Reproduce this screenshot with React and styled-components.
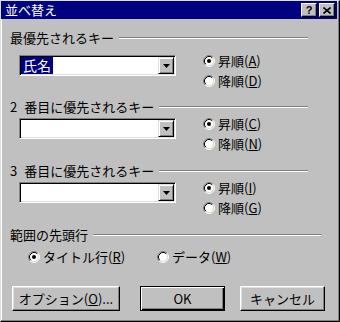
import React from 'react';
import styled, { createGlobalStyle } from 'styled-components';

const GlobalStyle = createGlobalStyle`
  html, body {
    margin: 0;
    padding: 0;
    background: #c0c0c0;
  }

  body {
    font-family: "Noto Sans CJK JP", "Noto Sans", sans-serif;
    font-size: 13px;
    color: #000;
  }
`;

const Window = styled.div`
  box-sizing: border-box;
  width: 340px;
  height: 322px;
  display: flex;
  flex-direction: column;
  padding: 0 2px 2px 0;
  background: #c0c0c0;
  border-style: solid;
  border-width: 1px;
  border-color: #dfdfdf #000 #000 #dfdfdf;
  box-shadow: inset -1px -1px #808080, inset 1px 1px #fff;
`;

const TitleBar = styled.div`
  display: flex;
  align-items: center;
  height: 18px;
  padding: 0 2px 0 4px;
  background: #000080;
  color: #fff;
`;

const Title = styled.div`
  margin-right: auto;
  line-height: 14px;
`;

const CaptionButton = styled.div`
  box-sizing: border-box;
  width: 16px;
  height: 14px;
  margin-left: ${(p) => p.$gap || 0}px;
  display: flex;
  align-items: center;
  justify-content: center;
  background: #c0c0c0;
  color: #000;
  border-style: solid;
  border-width: 1px;
  border-color: #fff #000 #000 #fff;
  box-shadow: inset -1px -1px #808080;
  font-family: "Liberation Sans", sans-serif;
  font-weight: bold;
  font-size: 11px;
  line-height: 11px;
`;

const Body = styled.div`
  display: flex;
  flex-direction: column;
  padding: 12px 0 0 9px;
`;

const Section = styled.div`
  display: flex;
  flex-direction: column;
  margin-top: ${(p) => p.$mt || 0}px;
`;

const Header = styled.div`
  display: flex;
  align-items: center;
  width: ${(p) => p.$width}px;
  height: 14px;
  line-height: 14px;
`;

const Legend = styled.div`
  white-space: nowrap;
  word-spacing: 4px;
`;

const Rule = styled.div`
  flex: 1;
  height: 0;
  margin-left: 5px;
  border-top: 1px solid #808080;
  border-bottom: 1px solid #fff;
`;

const KeyRow = styled.div`
  display: flex;
  align-items: flex-start;
  margin-top: ${(p) => p.$mt || 0}px;
  padding-left: 9px;
`;

const Combo = styled.div`
  box-sizing: border-box;
  width: 157px;
  height: 21px;
  margin-top: 4px;
  padding: 1px;
  display: flex;
  background: #fff;
  border-style: solid;
  border-width: 1px;
  border-color: #808080 #fff #fff #808080;
  box-shadow: inset 1px 1px #000, inset -1px -1px #dfdfdf;
`;

const ComboValue = styled.div`
  flex: 1;
  display: flex;
  align-items: center;
`;

const Selected = styled.span`
  height: 17px;
  padding: 0 2px;
  background: #000080;
  color: #fff;
  font-size: 14px;
  line-height: 17px;
`;

const DropButton = styled.div`
  box-sizing: border-box;
  width: 16px;
  display: flex;
  align-items: center;
  justify-content: center;
  background: #c0c0c0;
  border-style: solid;
  border-width: 1px;
  border-color: #dfdfdf #000 #000 #dfdfdf;
  box-shadow: inset 1px 1px #fff, inset -1px -1px #808080;
`;

const RadioCol = styled.div`
  display: flex;
  flex-direction: column;
  margin-left: 27px;
`;

const RadioItem = styled.label`
  display: flex;
  align-items: center;
  gap: 3px;
  height: 20px;
  width: ${(p) => (p.$width ? `${p.$width}px` : 'auto')};
  line-height: 14px;
  white-space: nowrap;
`;

const OptionRow = styled.div`
  display: flex;
  margin-top: 5px;
  padding-left: 18px;
`;

const ButtonRow = styled.div`
  display: flex;
  margin-top: 19px;
  padding-left: 2px;
`;

const Button = styled.div`
  box-sizing: border-box;
  width: ${(p) => p.$width}px;
  height: 25px;
  margin-left: ${(p) => p.$gap || 0}px;
  display: flex;
  align-items: center;
  justify-content: center;
  background: #c0c0c0;
  border-style: solid;
  border-width: 1px;
  border-color: ${(p) => (p.$default ? '#000' : '#fff #000 #000 #fff')};
  box-shadow: ${(p) => (p.$default
    ? 'inset 1px 1px #fff, inset -1px -1px #000, inset -2px -2px #808080'
    : 'inset -1px -1px #808080, inset 1px 1px #dfdfdf')};
  line-height: 14px;
  white-space: nowrap;
`;

const Radio = ({ checked }) => (
  <svg width="12" height="12" viewBox="0 0 12 12">
    <circle cx="6" cy="6" r="4.5" fill="#fff" />
    <path d="M2.11 9.89 A5.5 5.5 0 0 1 9.89 2.11" fill="none" stroke="#808080" />
    <path d="M9.89 2.11 A5.5 5.5 0 0 1 2.11 9.89" fill="none" stroke="#fff" />
    <path d="M2.82 9.18 A4.5 4.5 0 0 1 9.18 2.82" fill="none" stroke="#000" />
    <path d="M9.18 2.82 A4.5 4.5 0 0 1 2.82 9.18" fill="none" stroke="#dfdfdf" />
    {checked && <circle cx="6" cy="6" r="2" fill="#000" />}
  </svg>
);

const Option = ({ checked, label, keyChar, width }) => (
  <RadioItem $width={width}>
    <Radio checked={checked} />
    <span>
      {label}(<u>{keyChar}</u>)
    </span>
  </RadioItem>
);

const SortKey = ({ title, mt, rowMt, value, asc, desc }) => (
  <Section $mt={mt}>
    <Header $width={298}>
      <Legend>{title}</Legend>
      <Rule />
    </Header>
    <KeyRow $mt={rowMt}>
      <Combo>
        <ComboValue>{value && <Selected>{value}</Selected>}</ComboValue>
        <DropButton>
          <svg width="7" height="4" viewBox="0 0 7 4">
            <path d="M0 0h7L3.5 4z" fill="#000" />
          </svg>
        </DropButton>
      </Combo>
      <RadioCol>
        <Option checked label="昇順" keyChar={asc} />
        <Option label="降順" keyChar={desc} />
      </RadioCol>
    </KeyRow>
  </Section>
);

export default function App() {
  return (
    <>
      <GlobalStyle />
      <Window>
        <TitleBar>
          <Title>並べ替え</Title>
          <CaptionButton>?</CaptionButton>
          <CaptionButton $gap={2}>
            <svg width="8" height="7" viewBox="0 0 8 7">
              <path d="M0.5 0.5 L7.5 6.5 M7.5 0.5 L0.5 6.5" stroke="#000" strokeWidth="1.6" />
            </svg>
          </CaptionButton>
        </TitleBar>

        <Body>
          <SortKey title="最優先されるキー" rowMt={6} value="氏名" asc="A" desc="D" />
          <SortKey title="2 番目に優先されるキー" mt={9} asc="C" desc="N" />
          <SortKey title="3 番目に優先されるキー" mt={10} asc="I" desc="G" />

          <Section $mt={10}>
            <Header $width={311}>
              <Legend>範囲の先頭行</Legend>
              <Rule />
            </Header>
            <OptionRow>
              <Option checked label="タイトル行" keyChar="R" width={129} />
              <Option label="データ" keyChar="W" />
            </OptionRow>
          </Section>

          <ButtonRow>
            <Button $width={108}>
              <span>オプション(<u>O</u>)...</span>
            </Button>
            <Button $width={85} $gap={20} $default>OK</Button>
            <Button $width={85} $gap={15}>キャンセル</Button>
          </ButtonRow>
        </Body>
      </Window>
    </>
  );
}
